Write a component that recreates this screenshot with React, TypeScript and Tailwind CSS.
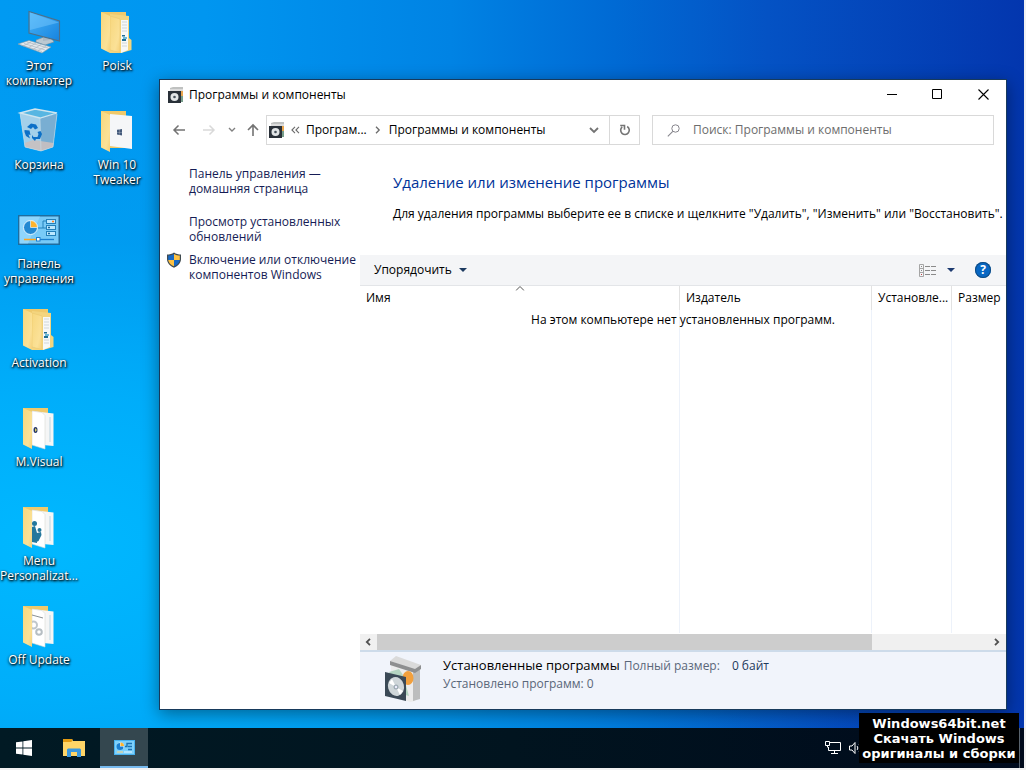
import type { ReactNode } from 'react';

const Computer = () => (
  <svg viewBox="0 0 48 48" className="size-12" aria-hidden="true">
    <defs>
      <linearGradient id="screen" x1="0" y1="0" x2="1" y2="1">
        <stop offset="0" stopColor="#48b4f8" />
        <stop offset="1" stopColor="#1683df" />
      </linearGradient>
    </defs>
    <path d="M21 32 29 29 37 31 39 34 30 37 21 34Z" fill="#bcc9d1" stroke="#72889a" strokeWidth=".6" />
    <path d="M28 26h7v6l-7 1Z" fill="#a9b8c4" />
    <path d="M14 3.500 44.500 13V33L14 25Z" fill="url(#screen)" stroke="#4d6f88" strokeWidth="1.100" />
    <path d="M15 4.500 44 14.500 15 22Z" fill="#7fcbff" opacity=".45" />
    <path d="M3 36 14 32.500 36 39 27 45Z" fill="#e3e9ed" stroke="#8798a4" strokeWidth=".6" />
    <path d="m6 37 21 6.500M9 35.500l21 6.500M12 34l21 6M8 38l8-4m-3 6 8-5m-3 6.500 8-5m-3 6 8-4" stroke="#a2afb8" strokeWidth=".6" />
  </svg>
);

const RecycleBin = () => (
  <svg viewBox="0 0 48 48" className="size-12" aria-hidden="true">
    <path d="m5 6 20 5 17-4-4 33-12 4-16-4Z" fill="#9fd1ee" />
    <path d="m5 6 20 5 1 33-16-4Z" fill="#a3d0ea" />
    <path d="m25 11 17-4-4 33-12 4Z" fill="#79aed2" />
    <path d="m9.500 36 9-3 20 3-.5 4-12 4-16-4Z" fill="#c9c0c0" opacity=".9" />
    <path d="m5 6 15-4 22 4-17 5Z" fill="#58b6e2" stroke="#cfe5ef" strokeWidth="1.300" />
    <path d="m5 6 5 34 16 4 12-4 4-33M25 11l1 33" fill="none" stroke="#c8dde8" strokeWidth=".6" />
    <g fill="#0c70c7">
      <path d="m12 20 4-3.500 5 1 2 3.500-3 1.500-2-2.500-2 2Z" />
      <path d="m9.500 23 5 .5 1 4.500-2-.5 1.500 4-4-2.500-1.500-4Z" />
      <path d="m17 28 1.500 2h4l1-3-1-2 3-1 1.500 3-2 5h-4l-1 2-3-3Z" />
    </g>
  </svg>
);

const ControlPanel = ({ className }: { className: string }) => (
  <svg viewBox="0 0 42 30" className={className} aria-hidden="true">
    <rect x=".75" y=".75" width="40.500" height="28.500" fill="#78caf7" stroke="#1e6d9f" strokeWidth="1.500" />
    <path d="M1.500 1.500H22L10 28.500H1.500Z" fill="#9cdcff" opacity=".65" />
    <circle cx="12.500" cy="12.500" r="7" fill="#2389d2" stroke="#e2f5ff" strokeWidth="1" />
    <path d="M12.500 12.500V5.500a7 7 0 0 1 7 7Z" fill="#ffb42d" stroke="#e8f6ff" strokeWidth=".7" />
    <path d="M20 13h5V6h3M25 13h3" fill="none" stroke="#2380ba" />
    <g fill="#bce8ff" stroke="#2380ba">
      <rect x="28.500" y="4.500" width="9" height="4" />
      <rect x="28.500" y="10.500" width="9" height="4" />
      <rect x="28.500" y="16.500" width="9" height="4" />
    </g>
    <path d="M34 6.500h2" stroke="#ff7d1f" strokeWidth="1.500" />
    <path d="M30 12.500h2M30 18.500h2" stroke="#16679d" strokeWidth="1.500" />
    <path d="M6 24.500h13" stroke="#ffa51f" strokeWidth="1.500" />
    <path d="M20 24.500h16" stroke="#1a7fd0" strokeWidth="1.300" />
    <rect x="18.500" y="22.500" width="3.500" height="3.500" fill="#fff" stroke="#1a7fd0" />
  </svg>
);

const MiniControlPanel = () => (
  <svg viewBox="0 0 21 15" className="h-[15px] w-[21px]" aria-hidden="true">
    <rect width="21" height="15" fill="#49b2ee" />
    <rect x="1" y="1" width="19" height="13" fill="#7ed1fb" />
    <circle cx="6.500" cy="6" r="3.500" fill="#e8f7ff" />
    <path d="M6 3v3.500h3.500A3.500 3.500 0 1 1 6 3Z" fill="#1b7fd0" />
    <path d="M6.500 2.500A3.500 3.500 0 0 1 10 6H6.500Z" fill="#ffb42d" />
    <path d="M11 6.500h2V3.500h1M14 3.500h4M14 6.500h4M14 9.500h4" fill="none" stroke="#1c74b3" strokeWidth="1.400" />
    <path d="M3 12h6" stroke="#ffd27a" />
    <path d="M10 12h8" stroke="#e8f7ff" />
  </svg>
);

const FolderShell = ({ children }: { children: ReactNode }) => (
  <svg viewBox="0 0 48 48" className="size-12" aria-hidden="true">
    <defs>
      <linearGradient id="flap" x1="0" y1="0" x2="1" y2="1">
        <stop offset="0" stopColor="#f7d77d" />
        <stop offset=".7" stopColor="#fbe197" />
        <stop offset="1" stopColor="#f5d079" />
      </linearGradient>
    </defs>
    <path d="M8 4H33V41H16Z" fill="#efc96b" />
    {children}
    <path d="M8 4 17 8V45L8 40.500Z" fill="url(#flap)" />
  </svg>
);

const NestedFolder = () => (
  <FolderShell>
    <path d="M17 6 36 8V30l2.500 2V42L28 45H17Z" fill="#f3d57f" />
    <path d="M28 12h7V42l-7 3Z" fill="#f7f8f7" />
    <path d="M29 14h5m-5 3h5m-5 3h5m-5 3h5m-5 12h5m-5 3h5" stroke="#bdc9cd" strokeWidth=".7" />
    <path d="M29 27h3v1.500h-3zM29 31h4v2h-4z" fill="#216f94" />
    <path d="M30 30h4" stroke="#3ca6d0" strokeWidth="1.500" />
    <path d="m17 8 10 3V44.500L17 42Z" fill="url(#flap)" stroke="#e8c568" strokeWidth=".5" />
  </FolderShell>
);

const WindowsFolder = () => (
  <FolderShell>
    <path d="m17 7 22 2V42l-22-3Z" fill="#f5f6f8" />
    <path d="m24 22.800 2.300-.4v2.500H24Zm2.500-.4 2.500-.4V25h-2.500ZM24 25.300h2.300V28l-2.300-.4Zm2.500 0H29v3.100l-2.500-.4Z" fill="#43597b" />
  </FolderShell>
);

const PageFolder = ({ children }: { children: ReactNode }) => (
  <FolderShell>
    <path d="M17 7 38.500 9.500V42L28 41Z" fill="#f5f6f6" />
    <path d="M35 13v25" stroke="#a3c5d8" strokeWidth=".7" />
    <path d="m17 7 10 1.500 3 3V45l-13-4Z" fill="#fff" stroke="#d8dad5" strokeWidth=".6" />
    {children}
  </FolderShell>
);

const VisualFolder = () => (
  <PageFolder>
    <ellipse cx="20.500" cy="26" rx="2" ry="3" fill="#253466" />
    <path d="m20 24 2 2-2 2Z" fill="#dbd262" />
  </PageFolder>
);

const MenuFolder = () => (
  <PageFolder>
    <g fill="#24779c">
      <circle cx="19.500" cy="20.500" r="2.500" />
      <circle cx="24.500" cy="27" r="2" />
      <path d="m17 24 3-1 2 7v10l-5-1zM22 30l4-1 .5 3-3 6-2 1z" />
    </g>
  </PageFolder>
);

const UpdateFolder = () => (
  <PageFolder>
    <path d="m17 13 11 3" stroke="#6b7478" strokeWidth=".8" />
    <circle cx="18.500" cy="23" r="3.500" fill="none" stroke="#c0c7cb" strokeWidth="2" />
    <circle cx="24" cy="30" r="2.800" fill="none" stroke="#b6bec3" strokeWidth="2" />
  </PageFolder>
);

const ProgramsBox = () => (
  <svg viewBox="0 0 40 48" className="h-12 w-10" aria-hidden="true">
    <path d="m7 5 24 8v32l-5 1L7 38Z" fill="#ececec" />
    <path d="m29 13 7-2v32l-7 2Z" fill="#bcbdbd" />
    <path d="m6 5 6-5 25 9-6 5Z" fill="#dadada" />
    <path d="m6 5 25 8 6-4v4l-6 4L6 9Z" fill="#8e8f90" />
    <path d="m5 16 10-3 4 6 6 21-7-2Z" fill="#b4d4c1" />
    <ellipse cx="24" cy="22" rx="5.500" ry="7" fill="#f2a03d" />
    <path d="m1 16 21 5v24L1 40Z" fill="#3b4956" />
    <ellipse cx="12" cy="30.500" rx="8" ry="9.500" fill="#cfd6d9" transform="rotate(-15 12 30.500)" />
    <path d="m12 31-7-4 3-4Zm0 0 7 4-3 4Z" fill="#fff" />
    <circle cx="12" cy="31" r="2.500" fill="#9facb4" />
    <circle cx="12" cy="31" r="1.200" fill="#eef" />
  </svg>
);

const ProgramsIcon = () => (
  <svg viewBox="0 0 16 16" className="size-4 shrink-0" aria-hidden="true">
    <path d="m2 1 3-1h10v15h-4L2 5Z" fill="#bfc1c0" />
    <path d="M2 2h13v2H2Z" fill="#dcdcdc" />
    <path d="M11 4h4v5h-4Z" fill="#eaa64e" />
    <path d="M12 9h3v6h-4Z" fill="#789e8b" />
    <path d="M0 4h13v12H0Z" fill="#293038" />
    <circle cx="6.500" cy="10" r="4" fill="#e2e5e6" />
    <circle cx="6.500" cy="10" r="1.300" fill="#46515a" />
  </svg>
);

const Shield = () => (
  <svg viewBox="0 0 16 16" className="size-4 shrink-0" aria-hidden="true">
    <path d="M8 .5C6 2 3.500 2.500 1 2.500V7c0 4 3 7 7 8.700C12 14 15 11 15 7V2.500C12.500 2.500 10 2 8 .5Z" fill="#3f4a50" />
    <path d="M8 2C6 3 4 3.500 2.200 3.600V8H8Z" fill="#1769c5" />
    <path d="M8 2c2 1 4 1.500 5.800 1.600V8H8Z" fill="#ffc242" />
    <path d="M2.200 8H8v6.300C4.700 13 2.700 11 2.200 8Z" fill="#ffc242" />
    <path d="M13.800 8H8v6.300c3.300-1.300 5.300-3.300 5.800-6.300Z" fill="#1769c5" />
  </svg>
);

const shortcuts: { label: string; icon: ReactNode }[] = [
  { label: 'Этот компьютер', icon: <Computer /> },
  { label: 'Корзина', icon: <RecycleBin /> },
  {
    label: 'Панель управления',
    icon: (
      <span className="flex size-12 items-center justify-center">
        <ControlPanel className="h-[30px] w-[42px]" />
      </span>
    ),
  },
  { label: 'Activation', icon: <NestedFolder /> },
  { label: 'M.Visual', icon: <VisualFolder /> },
  { label: 'Menu Personalizat...', icon: <MenuFolder /> },
  { label: 'Off Update', icon: <UpdateFolder /> },
  { label: 'Poisk', icon: <NestedFolder /> },
  { label: 'Win 10 Tweaker', icon: <WindowsFolder /> },
];

function Desktop() {
  return (
    <nav aria-label="Рабочий стол" className="grid w-[159px] shrink-0 grid-flow-col grid-cols-[78px_78px] grid-rows-[repeat(7,99px)] content-start">
      {shortcuts.map((s) => (
        <button key={s.label} type="button" className="flex flex-col items-center gap-0.5 pt-2 text-center leading-[15px] text-white [text-shadow:1px_1px_2px_#000,0_1px_3px_#000]">
          {s.icon}
          <span className="w-full">{s.label}</span>
        </button>
      ))}
    </nav>
  );
}

function TitleBar() {
  return (
    <header className="flex h-[29px] items-center pl-2">
      <ProgramsIcon />
      <h1 className="ml-[5px] flex-1">Программы и компоненты</h1>
      <button type="button" aria-label="Свернуть" className="flex h-full w-[45px] items-center justify-center">
        <svg viewBox="0 0 11 11" className="size-[11px]"><path d="M0 5.500h10" stroke="#000" /></svg>
      </button>
      <button type="button" aria-label="Развернуть" className="flex h-full w-[45px] items-center justify-center">
        <svg viewBox="0 0 11 11" className="size-[11px]"><path d="M.5.500h9v9h-9Z" fill="none" stroke="#000" /></svg>
      </button>
      <button type="button" aria-label="Закрыть" className="flex h-full w-[46px] items-center justify-center">
        <svg viewBox="0 0 11 11" className="size-[11px]"><path d="m.5.500 10 10m0-10-10 10" stroke="#000" strokeWidth="1.100" /></svg>
      </button>
    </header>
  );
}

function NavigationBar() {
  return (
    <div className="mt-px flex h-10 items-center pr-3 pl-3">
      <div className="flex w-[94px] shrink-0 items-center">
        <button type="button" aria-label="Назад" className="w-[30px]">
          <svg viewBox="0 0 14 12" className="h-3 w-3.5"><path d="M13 6H2m4.500-4.500L2 6l4.500 4.500" fill="none" stroke="#737373" strokeWidth="1.500" /></svg>
        </button>
        <button type="button" aria-label="Вперед" className="w-[26px]">
          <svg viewBox="0 0 14 12" className="h-3 w-3.5"><path d="M1 6h11M7.500 1.500 12 6l-4.500 4.500" fill="none" stroke="#d9d9d9" strokeWidth="1.500" /></svg>
        </button>
        <button type="button" aria-label="Последние расположения" className="w-[18px]">
          <svg viewBox="0 0 8 8" className="size-2"><path d="m1 2 3 3 3-3" fill="none" stroke="#808080" strokeWidth="1.400" /></svg>
        </button>
        <button type="button" aria-label="Вверх" className="w-3.5">
          <svg viewBox="0 0 14 14" className="size-3.5"><path d="M7 13V2M2 7l5-5 5 5" fill="none" stroke="#737373" strokeWidth="1.600" /></svg>
        </button>
      </div>
      <div className="flex h-[30px] min-w-0 flex-1 items-stretch border border-[#d9d9d9]">
        <div className="flex min-w-0 flex-1 items-center whitespace-nowrap">
          <span className="pr-1.5 pl-0.5"><ProgramsIcon /></span>
          <svg viewBox="0 0 9 8" className="h-2 w-[9px]" aria-hidden="true"><path d="M4 .8.900 4 4 7.200M8 .8 4.900 4 8 7.200" fill="none" stroke="#6b6b6b" strokeWidth="1.100" /></svg>
          <a href="#control-panel" className="ml-1.5">Програм...</a>
          <svg viewBox="0 0 6 8" className="mx-2 h-2 w-1.5" aria-hidden="true"><path d="M1 .8 4.200 4 1 7.200" fill="none" stroke="#6b6b6b" strokeWidth="1.300" /></svg>
          <a href="#programs">Программы и компоненты</a>
        </div>
        <button type="button" aria-label="Предыдущие расположения" className="flex w-[30px] items-center justify-center">
          <svg viewBox="0 0 10 8" className="h-2 w-2.5"><path d="m1 2 4 4 4-4" fill="none" stroke="#737373" strokeWidth="1.800" /></svg>
        </button>
        <button type="button" aria-label="Обновить" className="flex w-[30px] items-center justify-center border-l border-[#d9d9d9]">
          <svg viewBox="0 0 12 12" className="size-3"><path d="M8.200 2.500a4.300 4.300 0 1 1-5 .4M1.200 1.500h4.300v4.200" fill="none" stroke="#757575" strokeWidth="1.600" /></svg>
        </button>
      </div>
      <label className="ml-3 flex h-[30px] w-[342px] shrink-0 items-center border border-[#d9d9d9] pl-3.5">
        <svg viewBox="0 0 13 13" className="size-[13px] shrink-0" aria-hidden="true"><circle cx="8.500" cy="4.500" r="3.700" fill="none" stroke="#86858c" /><path d="M5.800 7.300.8 12.300" stroke="#86858c" strokeWidth="1.100" /></svg>
        <input type="text" aria-label="Поиск" placeholder="Поиск: Программы и компоненты" className="ml-[13px] w-full min-w-0 bg-transparent outline-none placeholder:text-[#6d6d6d]" />
      </label>
    </div>
  );
}

function Sidebar() {
  return (
    <aside className="w-[200px] shrink-0 pt-4 pl-1.5 leading-[15px] text-[#151c55]">
      <a href="#home" className="ml-[23px] block">Панель управления —<br />домашняя страница</a>
      <a href="#updates" className="mt-[18px] ml-[23px] block">Просмотр установленных<br />обновлений</a>
      <a href="#features" className="mt-2 flex gap-[7px] whitespace-nowrap"><Shield /><span>Включение или отключение<br />компонентов Windows</span></a>
    </aside>
  );
}

function ProgramTable() {
  return (
    <div className="relative flex min-h-0 flex-1">
      <table className="w-full table-fixed border-separate border-spacing-0">
        <colgroup>
          <col />
          <col className="w-48" />
          <col className="w-20" />
          <col className="w-[54px]" />
        </colgroup>
        <thead>
          <tr className="h-6 text-left">
            <th scope="col" className="relative border-r border-[#e2e2e2] px-1.5 py-0 font-normal">
              Имя
              <svg viewBox="0 0 9 5" className="absolute top-0 left-1/2 h-[5px] w-[9px] -translate-x-1/2" aria-hidden="true"><path d="m.5 4.500 4-4 4 4" fill="none" stroke="#555" /></svg>
            </th>
            <th scope="col" className="border-r border-[#e2e2e2] px-1.5 py-0 font-normal">Издатель</th>
            <th scope="col" className="border-r border-[#e2e2e2] py-0 pr-0 pl-1.5 font-normal whitespace-nowrap">Установле...</th>
            <th scope="col" className="py-0 pr-0 pl-1.5 font-normal">Размер</th>
          </tr>
        </thead>
        <tbody>
          <tr>
            <td className="border-r border-[#edf2fa]" />
            <td className="border-r border-[#edf2fa]" />
            <td className="border-r border-[#edf2fa]" />
            <td />
          </tr>
        </tbody>
      </table>
      <p className="absolute inset-x-0 top-[26px] text-center">На этом компьютере нет установленных программ.</p>
    </div>
  );
}

function ProgramsWindow() {
  return (
    <main className="mt-[79px] mr-[17px] mb-[18px] flex min-w-0 flex-1 flex-col border border-[#173a5c] bg-white text-black shadow-[0_4px_16px_rgba(0,0,0,0.4)]">
      <TitleBar />
      <NavigationBar />
      <div className="flex min-h-0 flex-1">
        <Sidebar />
        <section className="flex min-w-0 flex-1 flex-col">
          <div className="flex h-[105px] flex-col gap-3.5 pt-[22px] pl-[33px]">
            <h2 className="text-[15px] leading-5 text-[#003399]">Удаление или изменение программы</h2>
            <p className="whitespace-nowrap">Для удаления программы выберите ее в списке и щелкните "Удалить", "Изменить" или "Восстановить".</p>
          </div>
          <div className="flex h-[31px] items-center border-b border-[#e3e5e8] bg-[#f4f5f7] pr-[15px] pl-3.5">
            <button type="button" className="flex items-center gap-[7px]">
              Упорядочить
              <svg viewBox="0 0 8 4" className="h-1 w-2" aria-hidden="true"><path d="M0 0h8L4 4Z" fill="#1c3a60" /></svg>
            </button>
            <button type="button" aria-label="Представление" className="ml-auto flex items-center gap-[11px]">
              <svg viewBox="0 0 17 13" className="h-[13px] w-[17px]"><path d="M.5.500h4v12h-4ZM.5 4.500h4m-4 4h4" fill="none" stroke="#a5a5a5" /><path d="M2 2.500h1M2 6.500h1" stroke="#888" /><path d="M2 10.500h1" stroke="#c04040" /><path d="M6 2.500h5m1 0h5m-11 4h5m1 0h5m-11 4h5m1 0h5" stroke="#8a8a8a" /></svg>
              <svg viewBox="0 0 8 4" className="h-1 w-2"><path d="M0 0h8L4 4Z" fill="#1c3a70" /></svg>
            </button>
            <button type="button" aria-label="Справка" className="ml-5 flex size-4 items-center justify-center rounded-full bg-[#0767c3] text-xs leading-4 font-bold text-white ring-1 ring-[#104b82] ring-inset">?</button>
          </div>
          <ProgramTable />
          <div className="mt-px flex h-4 items-stretch bg-[#f0f0f0]">
            <button type="button" aria-label="Прокрутить влево" className="flex w-4 items-center justify-center">
              <svg viewBox="0 0 6 8" className="h-2 w-1.5"><path d="M5 .8 1.800 4 5 7.200" fill="none" stroke="#505050" strokeWidth="1.800" /></svg>
            </button>
            <div className="flex-1 pl-px"><div className="h-full w-[81%] bg-[#cdcdcd]" /></div>
            <button type="button" aria-label="Прокрутить вправо" className="flex w-[18px] items-center justify-center">
              <svg viewBox="0 0 6 8" className="h-2 w-1.5"><path d="M1 .8 4.200 4 1 7.200" fill="none" stroke="#505050" strokeWidth="1.800" /></svg>
            </button>
          </div>
          <footer className="flex h-[59px] gap-[19px] border-t-2 border-[#cddbea] bg-[#f1f4fb] pt-1 pl-6">
            <ProgramsBox />
            <div className="text-[#5a6779]">
              <p className="flex items-baseline leading-[18px] whitespace-nowrap">
                <span className="text-[13px] text-black">Установленные программы</span>
                <span className="ml-1">Полный размер:</span>
                <span className="ml-3 text-[#1e395b]">0 байт</span>
              </p>
              <p className="leading-[18px]">Установлено программ: 0</p>
            </div>
          </footer>
        </section>
      </div>
    </main>
  );
}

function Taskbar() {
  return (
    <footer className="relative flex h-10 shrink-0 bg-linear-to-r from-[#011a24] via-[#01141f] to-[#000a1c] text-white">
      <button type="button" aria-label="Пуск" className="flex w-12 items-center justify-center">
        <svg viewBox="0 0 16 16" className="size-4"><path d="M0 2.300 6.500 1.400v6.200H0ZM7.300 1.300 16 0v7.600H7.300ZM0 8.400h6.500v6.200L0 13.700ZM7.300 8.400H16V16l-8.700-1.300Z" fill="#fff" /></svg>
      </button>
      <button type="button" aria-label="Проводник" className="mr-px flex w-[51px] items-center justify-center">
        <svg viewBox="0 0 22 18" className="h-[18px] w-[22px]"><path d="M0 0h9l1 2h12v15H0Z" fill="#ffd567" /><path d="M0 0h9.500l-1 3H0Z" fill="#e49b12" /><path d="M4 18V10.500l1-1h12l1 1V18h-4v-5H8v5Z" fill="#3a98df" /></svg>
      </button>
      <button type="button" aria-label="Программы и компоненты" className="flex w-12 items-center justify-center border-b-2 border-[#76b9ed] bg-[#34474f]">
        <MiniControlPanel />
      </button>
      <div className="mr-[165px] ml-auto flex items-center gap-2">
        <svg viewBox="0 0 16 14" className="h-3.5 w-4" aria-hidden="true"><path d="M5 1.500h10.500v8H3.500V6M9.500 9.500v3M6 12.500h7M.5.500h4v4h-4ZM2.500 4.500v2" fill="none" stroke="#fff" /></svg>
        <svg viewBox="0 0 16 14" className="-mr-1.5 h-3.5 w-4" aria-hidden="true"><path d="M.5 5H3l3-3.500v11L3 9H.5ZM8 5c1 1 1 3 0 4M10 3c2 2 2 6 0 8" fill="none" stroke="#fff" /></svg>
      </div>
      <div className="absolute inset-y-0 right-1 w-px bg-[#59636d]" />
      <p className="absolute right-[5px] bottom-[5px] w-40 bg-black pt-[3px] pb-0.5 text-center font-['DejaVu_Sans',sans-serif] text-[13px] leading-[15px] font-bold whitespace-nowrap">
        Windows64bit.net<br />Скачать Windows<br />оригиналы и сборки
      </p>
    </footer>
  );
}

export default function App() {
  return (
    <div className="flex h-screen flex-col bg-[#f2f2f2] pr-0.5 pb-0.5 font-['Open_Sans','Noto_Sans',sans-serif] text-xs">
      <div className="flex min-h-0 flex-1 bg-[radial-gradient(ellipse_85%_70%_at_5%_75%,#00b8ff_0%,#00b2fcd0_30%,#00a0f080_60%,#00a0f000_100%),linear-gradient(to_right,#009af2_0%,#0096f0_20%,#0083e4_44%,#006ad4_60%,#0452c4_75%,#0336ae_100%)]">
        <Desktop />
        <ProgramsWindow />
      </div>
      <Taskbar />
    </div>
  );
}
